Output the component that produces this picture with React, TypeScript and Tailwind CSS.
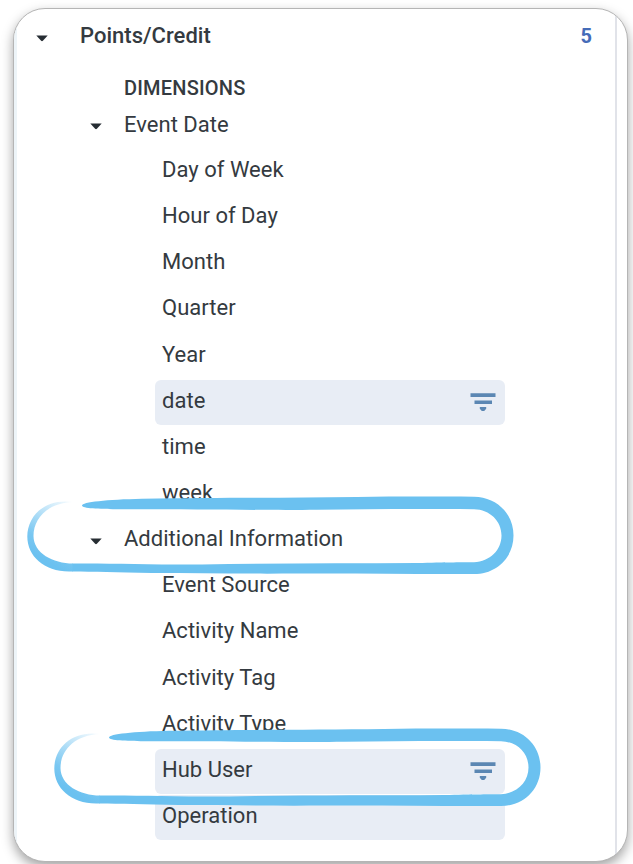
import clsx from "clsx";

const dateFields = [
  { label: "Day of Week" },
  { label: "Hour of Day" },
  { label: "Month" },
  { label: "Quarter" },
  { label: "Year" },
  { label: "date", active: true, filtered: true },
  { label: "time" },
  { label: "week" },
];

const infoFields = [
  { label: "Event Source" },
  { label: "Activity Name" },
  { label: "Activity Tag" },
  { label: "Activity Type" },
  { label: "Hub User", active: true, filtered: true, marked: true },
  { label: "Operation", active: true },
];

function Caret() {
  return (
    <svg className="w-3 h-[7px] mt-[4px] shrink-0" viewBox="0 0 12 7">
      <path d="M0.3 0.5h11.4L6.9 5.8q-.9.8-1.8 0z" fill="#262d33" />
    </svg>
  );
}

function FilterIcon() {
  return (
    <svg className="w-[26px] h-[20px] shrink-0" viewBox="0 0 26 20">
      <path
        d="M0.5 1.300h25v3.800h-25zM4.500 8.500h17.500v3.400h-17.500zM9.800 15h6.400v1.800l-2 2.200h-2.400l-2-2.200z"
        fill="#5b87b3"
      />
    </svg>
  );
}

// Brush stroke ring, open at the top left
function Marker({ id, className }: { id: string; className: string }) {
  return (
    <svg
      className={clsx("absolute z-10 w-[488px] h-[80px] pointer-events-none", className)}
      viewBox="0 0 488 80"
    >
      <defs>
        <linearGradient id={id} gradientUnits="userSpaceOnUse" x1="46" y1="5" x2="14" y2="62">
          <stop offset="0" stopColor="#6bc1f0" stopOpacity="0.05" />
          <stop offset="0.35" stopColor="#6bc1f0" stopOpacity="0.45" />
          <stop offset="0.75" stopColor="#6bc1f0" stopOpacity="0.9" />
          <stop offset="1" stopColor="#6bc1f0" />
        </linearGradient>
      </defs>
      <path
        d="M46 6C18 2 .3 20 .3 40.500C.3 60 17 75.500 42 75.500H46V67.500C26 67.500 6.500 57 6.500 40C6.500 23 20 7 46 6Z"
        fill={`url(#${id})`}
      />
      <path
        d="M55 9.500C55 6 80 3.500 115 2.700C200 1.500 260 2 330 1C370 .3 410 .5 447 .7C470 1 486.500 18 486.500 39.500C486.500 61 470 78 447 78C390 78.500 330 77 270 77.500C220 78 170 77 125 77C90 76 65 76 45.500 75.500V67.500C80 67 120 68.700 175 68.500C250 67 320 67.500 390 67C420 66 430 66.500 447 66.200C463 65.500 474.500 54 474.500 39.500C474.500 25 463 13.500 447 13.200C390 13 340 13 290 13.800C240 14.500 170 13 90 13.200C72 13 55 12.500 55 9.500Z"
        fill="#6bc1f0"
      />
    </svg>
  );
}

type Field = { label: string; active?: boolean; filtered?: boolean; marked?: boolean };

function FieldRow({ label, active, filtered, marked }: Field) {
  return (
    <div className="relative h-[46.15px] ml-[141px] w-[350px]">
      <div
        className={clsx(
          "h-[45px] flex items-center justify-between pl-[7px] pr-[9px] rounded-[6px]",
          active && "bg-[#e8edf5]",
        )}
      >
        <span className="pb-[3px]">{label}</span>
        {filtered && <FilterIcon />}
      </div>
      {marked && <Marker id="fade-hub" className="-left-[101px] -top-[20.5px]" />}
    </div>
  );
}

export default function App() {
  return (
    <div className="h-[864px] overflow-hidden bg-white pl-[13px] pt-[8px] font-[Roboto,sans-serif] text-[22px] leading-[26px] tracking-[0.02px] text-[#343a40]">
      <div className="relative flex w-[615px] h-[854px] rounded-[32px] border border-[#b5b5b5] bg-white overflow-hidden shadow-[0_5px_12px_rgba(0,0,0,0.36)]">
        <div className="w-[3px] shrink-0 bg-[#edf4f8]" />
        <div className="-ml-[3px] w-[603px] shrink-0 border-r-2 border-[#e1e3e9]">
          <div className="flex items-center h-[54px] pl-[22px] pr-[23px] font-medium">
            <Caret />
            <span className="ml-[32px]">Points/Credit</span>
            <span className="ml-auto text-[20px] font-bold text-[#456cb8]">5</span>
          </div>
          <div className="mt-[11px] pl-[110px] h-[28px] text-[20px] leading-[28px] tracking-[0.2px] font-medium">
            DIMENSIONS
          </div>
          <div className="flex items-center h-[45px] mb-[2px] pl-[76px]">
            <Caret />
            <span className="ml-[22px]">Event Date</span>
          </div>
          {dateFields.map((f) => (
            <FieldRow key={f.label} {...f} />
          ))}
          <div className="relative flex items-center h-[46.15px] pb-[4px] pl-[76px]">
            <Caret />
            <span className="ml-[22px]">Additional Information</span>
            <Marker id="fade-info" className="left-[13px] -top-[22.5px]" />
          </div>
          {infoFields.map((f) => (
            <FieldRow key={f.label} {...f} />
          ))}
        </div>
      </div>
    </div>
  );
}
